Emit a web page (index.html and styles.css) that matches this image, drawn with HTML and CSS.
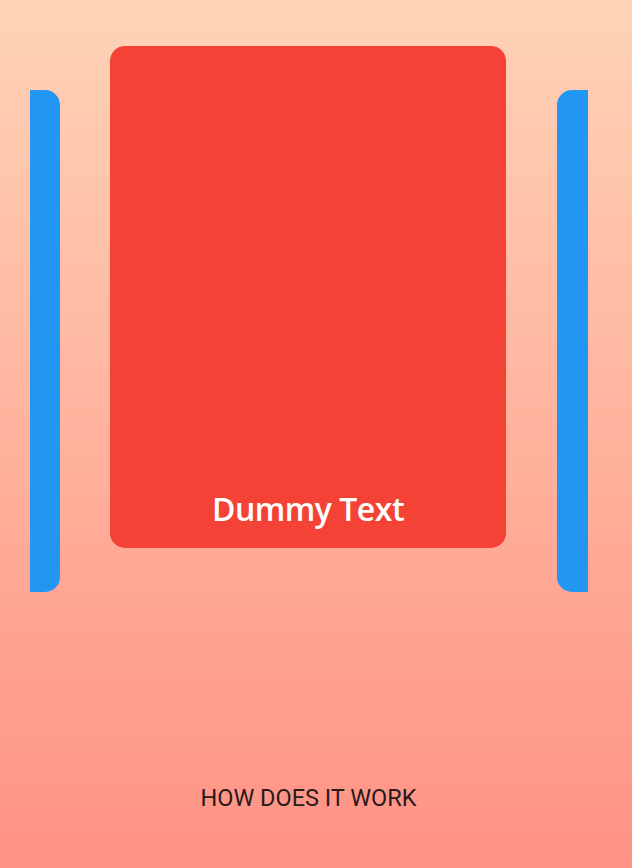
FILE: index.html
```html
<!DOCTYPE html>
<html>
<head>
    <title>How does it work</title>
    <link rel="stylesheet" href="styles.css">
</head>
<body>
    <div class="pager">
        <div class="card side prev"></div>
        <div class="card main">
            <p class="card-title">Dummy Text</p>
        </div>
        <div class="card side next"></div>
    </div>

    <div class="how">HOW DOES IT WORK</div>
</body>
</html>
```
FILE: styles.css
```css
body {
    margin: 0;
    padding: 0;
    height: 868px;
    background: linear-gradient(to bottom, #ffd3b6, #ff9284);
    font-family: Roboto, "Liberation Sans", sans-serif;
    overflow: hidden;
}

.pager {
    display: flex;
    align-items: flex-start;
    width: 558px;
    height: 546px;
    margin: 46px 0 0 30px;
    overflow: hidden;
}

.card {
    flex-shrink: 0;
    width: 396px;
    height: 502px;
    border-radius: 15px;
}

.side {
    background-color: #2196f3;
    margin-top: 44px;
}

.prev {
    margin-left: -366px;
    margin-right: 50px;
}

.next {
    margin-left: 51px;
}

.main {
    background-color: #f44336;
    display: flex;
    flex-direction: column;
    justify-content: flex-end;
    align-items: center;
}

.card-title {
    margin: 0 0 18px 0;
    color: #fff;
    font-family: "Open Sans", "Noto Sans", sans-serif;
    font-weight: 600;
    font-size: 32px;
    letter-spacing: -0.5px;
}

.how {
    margin-top: 193px;
    padding-right: 15px;
    text-align: center;
    font-size: 23.5px;
    line-height: 27px;
    color: #2a1a1a;
}
```
